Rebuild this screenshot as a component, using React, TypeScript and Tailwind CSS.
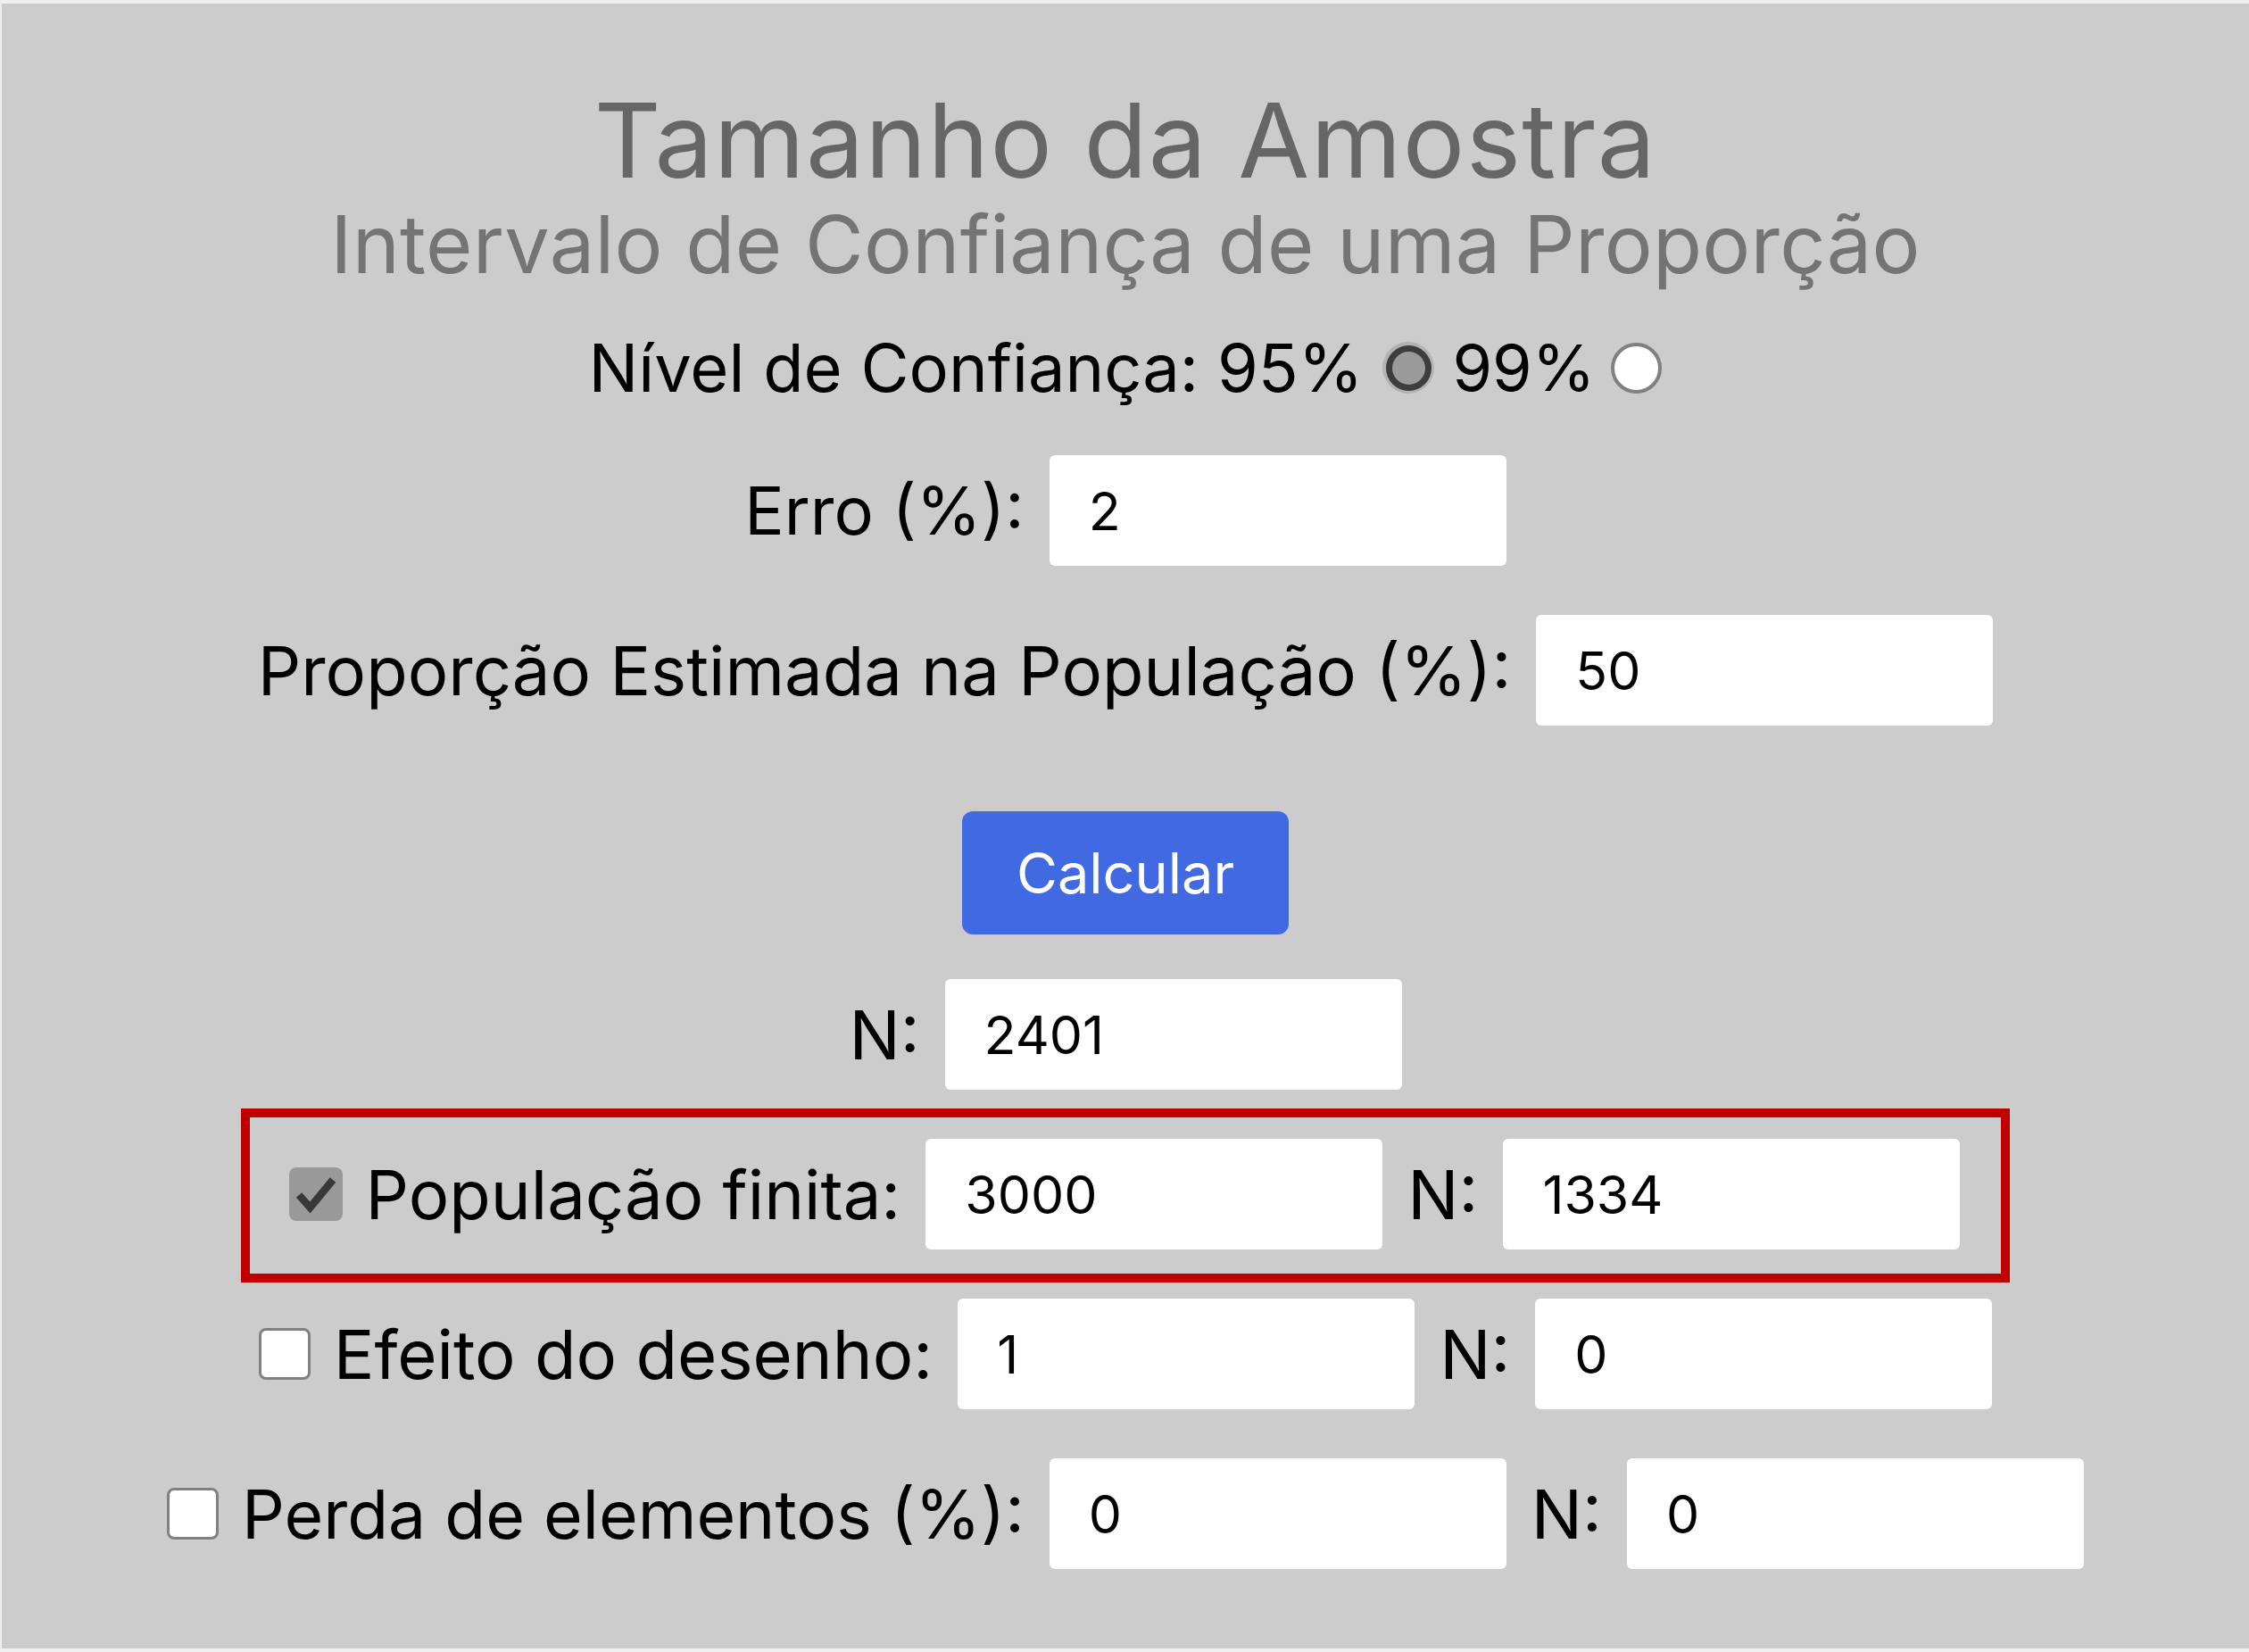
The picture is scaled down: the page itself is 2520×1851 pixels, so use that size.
const LABEL = "text-[76px] leading-none text-black whitespace-nowrap";

function Radio({ checked }: { checked?: boolean }) {
  if (checked) {
    return (
      <span className="flex size-[58px] flex-none items-center justify-center rounded-full bg-[#b3b3b3]">
        <span className="flex size-[51px] items-center justify-center rounded-full bg-[#3d3d3d]">
          <span className="size-[37px] rounded-full bg-[#9a9a9a]" />
        </span>
      </span>
    );
  }
  return (
    <span className="block size-[57px] flex-none rounded-full border-[4px] border-[#808080] bg-white" />
  );
}

function Check({ checked }: { checked?: boolean }) {
  if (checked) {
    return (
      <span className="flex size-[60px] flex-none items-center justify-center rounded-[8px] bg-[#999999]">
        <svg viewBox="0 0 60 60" className="size-[60px]">
          <path
            d="M11 31 L23.5 45 L49 14"
            fill="none"
            stroke="#383838"
            strokeWidth="8.5"
          />
        </svg>
      </span>
    );
  }
  return (
    <span className="block size-[58px] flex-none rounded-[8px] border-[3px] border-[#808080] bg-white" />
  );
}

function Field({ value }: { value: string }) {
  return (
    <input
      type="text"
      readOnly
      value={value}
      className="h-[124px] w-[512px] flex-none rounded-[6px] bg-white pl-[44px] text-[59px] text-black outline-none"
    />
  );
}

function OptionRow({
  checked,
  label,
  value,
  n,
  size = "text-[76px]",
}: {
  checked?: boolean;
  label: string;
  value: string;
  n: string;
  size?: string;
}) {
  return (
    <div className="flex h-[124px] items-center">
      <Check checked={checked} />
      <span className={`${size} ml-[26px] leading-none whitespace-nowrap text-black`}>
        {label}
      </span>
      <span className="ml-[28px] flex">
        <Field value={value} />
      </span>
      <span className={`${LABEL} ml-[28px]`}>N:</span>
      <span className="ml-[28px] flex">
        <Field value={n} />
      </span>
    </div>
  );
}

export default function App() {
  return (
    <div className="h-[1851px] border-y-[4px] border-l-[2px] border-[#efefef] bg-[#cccccc] font-['Inter',sans-serif]">
      <div className="flex flex-col items-center pt-[93px]">
        <h1 className="flex h-[120px] items-center text-[116px] leading-none font-normal tracking-[0.012em] text-[#666666]">
          Tamanho da Amostra
        </h1>
        <h2 className="mt-[7px] flex h-[100px] items-center text-[90px] leading-none font-normal tracking-[0.003em] text-[#747474]">
          Intervalo de Confiança de uma Proporção
        </h2>

        <div className="mt-[48px] flex h-[80px] items-center">
          <span className="text-[74px] leading-none whitespace-nowrap text-black">
            Nível de Confiança: 95%
          </span>
          <span className="ml-[22px] flex">
            <Radio checked />
          </span>
          <span className="ml-[20px] text-[72px] leading-none whitespace-nowrap text-black">
            99%
          </span>
          <span className="ml-[18px] flex">
            <Radio />
          </span>
        </div>

        <div className="mt-[58px] flex h-[124px] items-center gap-[28px]">
          <span className="text-[74px] leading-none whitespace-nowrap text-black">
            Erro (%):
          </span>
          <Field value="2" />
        </div>

        <div className="mt-[55px] flex h-[124px] items-center gap-[28px]">
          <span className={LABEL}>Proporção Estimada na População (%):</span>
          <Field value="50" />
        </div>

        <button
          type="button"
          className="mt-[96px] h-[138px] w-[366px] rounded-[12px] bg-[#4169e1] text-[63px] leading-none text-white"
        >
          Calcular
        </button>

        <div className="mt-[50px] flex h-[124px] items-center gap-[28px]">
          <span className={LABEL}>N:</span>
          <Field value="2401" />
        </div>

        <div className="mt-[21px] border-[10px] border-[#c00000] pt-[24px] pr-[46px] pb-[27px] pl-[44px]">
          <OptionRow checked label="População finita:" value="3000" n="1334" />
        </div>

        <div className="mt-[18px]">
          <OptionRow label="Efeito do desenho:" value="1" n="0" />
        </div>

        <div className="mt-[55px]">
          <OptionRow
            label="Perda de elementos (%):"
            value="0"
            n="0"
            size="text-[75px]"
          />
        </div>
      </div>
    </div>
  );
}
